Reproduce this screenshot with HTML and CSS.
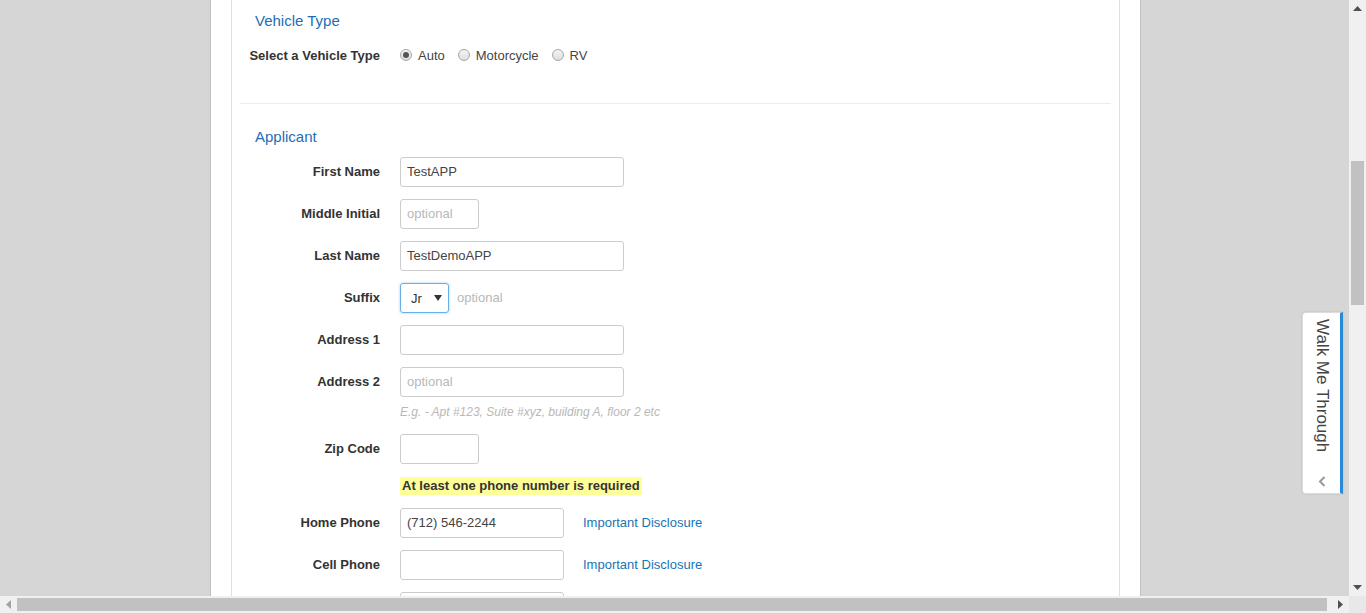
FILE: index.html
```html
<!DOCTYPE html>
<html lang="en">
<head>
<meta charset="utf-8">
<title>Application</title>
<link rel="stylesheet" href="styles.css">
</head>
<body>
<div class="window">
  <div class="main">
    <div class="viewport">
      <div class="page">
        <div class="panel">
          <section class="section">
            <h2 class="section-title">Vehicle Type</h2>
            <div class="row">
              <div class="label label-radio">Select a Vehicle Type</div>
              <div class="field radios">
                <span class="radio checked"></span><span class="radio-text">Auto</span>
                <span class="radio"></span><span class="radio-text">Motorcycle</span>
                <span class="radio"></span><span class="radio-text">RV</span>
              </div>
            </div>
          </section>
          <hr class="divider">
          <section class="section applicant">
            <h2 class="section-title">Applicant</h2>
            <div class="rows">
              <div class="row">
                <div class="label">First Name</div>
                <div class="field"><div class="input w-lg">TestAPP</div></div>
              </div>
              <div class="row">
                <div class="label">Middle Initial</div>
                <div class="field"><div class="input w-sm placeholder">optional</div></div>
              </div>
              <div class="row">
                <div class="label">Last Name</div>
                <div class="field"><div class="input w-lg">TestDemoAPP</div></div>
              </div>
              <div class="row">
                <div class="label">Suffix</div>
                <div class="field">
                  <div class="select">
                    <span>Jr</span>
                    <svg class="caret" width="8" height="6" viewBox="0 0 8 6"><path d="M0 0h8L4 6z" fill="#333"/></svg>
                  </div>
                  <span class="optional">optional</span>
                </div>
              </div>
              <div class="row">
                <div class="label">Address 1</div>
                <div class="field"><div class="input w-lg"></div></div>
              </div>
              <div class="row row-top">
                <div class="label label-top">Address 2</div>
                <div class="field field-col">
                  <div class="input w-lg placeholder">optional</div>
                  <div class="hint">E.g. - Apt #123, Suite #xyz, building A, floor 2 etc</div>
                </div>
              </div>
              <div class="row">
                <div class="label">Zip Code</div>
                <div class="field"><div class="input w-sm"></div></div>
              </div>
              <div class="row row-notice">
                <div class="label"></div>
                <div class="field"><span class="notice">At least one phone number is required</span></div>
              </div>
              <div class="row">
                <div class="label">Home Phone</div>
                <div class="field">
                  <div class="input w-md">(712) 546-2244</div>
                  <a class="link">Important Disclosure</a>
                </div>
              </div>
              <div class="row">
                <div class="label">Cell Phone</div>
                <div class="field">
                  <div class="input w-md"></div>
                  <a class="link">Important Disclosure</a>
                </div>
              </div>
              <div class="row">
                <div class="label"></div>
                <div class="field">
                  <div class="input w-md"></div>
                </div>
              </div>
            </div>
          </section>
        </div>
      </div>
      <div class="walk-tab">
        <span class="walk-text">Walk Me Through</span>
        <svg class="walk-chevron" width="8" height="11" viewBox="0 0 8 11"><path d="M6.5 1L2 5.5 6.5 10" fill="none" stroke="#999" stroke-width="2"/></svg>
      </div>
    </div>
    <div class="vscroll">
      <div class="arrow-box"><svg width="9" height="5" viewBox="0 0 9 5"><path d="M0 5L4.5 0 9 5z" fill="#505050"/></svg></div>
      <div class="vtrack">
        <div class="vthumb"></div>
      </div>
      <div class="arrow-box"><svg width="9" height="5" viewBox="0 0 9 5"><path d="M0 0h9L4.5 5z" fill="#505050"/></svg></div>
    </div>
  </div>
  <div class="hscroll">
    <div class="harrow"><svg width="5" height="9" viewBox="0 0 5 9"><path d="M5 0v9L0 4.5z" fill="#a3a3a3"/></svg></div>
    <div class="htrack"><div class="hthumb"></div></div>
    <div class="harrow"><svg width="5" height="9" viewBox="0 0 5 9"><path d="M0 0v9l5-4.5z" fill="#505050"/></svg></div>
    <div class="corner"></div>
  </div>
</div>
</body>
</html>
```

FILE: styles.css
```css
* { box-sizing: border-box; }

html, body {
  margin: 0;
  padding: 0;
  width: 1366px;
  height: 613px;
  overflow: hidden;
  font-family: "Liberation Sans", Arial, sans-serif;
  font-size: 13px;
  color: #333;
}

.window {
  display: flex;
  flex-direction: column;
  width: 1366px;
  height: 613px;
}

.main {
  display: flex;
  height: 596px;
}

.viewport {
  position: relative;
  flex: 1;
  background: #d6d6d6;
  overflow: hidden;
  display: flex;
}

.page {
  margin-left: 210px;
  width: 931px;
  height: 100%;
  background: #fff;
  border-left: 1px solid #c2c2c2;
  border-right: 1px solid #c2c2c2;
  padding: 0 20px;
  display: flex;
  flex-direction: column;
}

.panel {
  flex: 1;
  border-left: 1px solid #e0e0e0;
  border-right: 1px solid #e0e0e0;
  padding-top: 11px;
}

.section-title {
  margin: 0;
  padding-left: 23px;
  font-size: 15px;
  line-height: 20px;
  font-weight: normal;
  color: #1f6db3;
}

.row {
  display: grid;
  grid-template-columns: 148px 1fr;
  column-gap: 20px;
  align-items: center;
  min-height: 30px;
}

.section > .row {
  margin-top: 9px;
}

.label {
  text-align: right;
  font-weight: bold;
  color: #333;
  padding-bottom: 2px;
}

.label-radio { padding-bottom: 0; }

.field {
  display: flex;
  align-items: center;
}

.radios {
  height: 30px;
}

.radio {
  width: 12px;
  height: 12px;
  border-radius: 50%;
  border: 1px solid #a8a8a8;
  background: linear-gradient(#f4f4f4, #dedede);
  display: inline-flex;
  align-items: center;
  justify-content: center;
}

.radio.checked::after {
  content: "";
  width: 6px;
  height: 6px;
  border-radius: 50%;
  background: #555;
}

.radio-text {
  margin-left: 6px;
  margin-right: 13px;
  color: #444;
}

.divider {
  margin: 33px 8px 0;
  border: 0;
  border-top: 1px solid #ececec;
  height: 0;
}

.applicant {
  padding-top: 23px;
}

.rows {
  margin-top: 10px;
  display: flex;
  flex-direction: column;
  gap: 12px;
}

.input {
  height: 30px;
  border: 1px solid #ccc;
  border-radius: 3px;
  padding: 0 6px;
  line-height: 28px;
  color: #444;
  background: #fff;
}

.placeholder { color: #b8b8b8; }

.w-lg { width: 224px; }
.w-md { width: 164px; }
.w-sm { width: 79px; }

.select {
  width: 49px;
  height: 30px;
  border: 1px solid #66afe9;
  border-radius: 3px;
  box-shadow: 0 0 3px rgba(102, 175, 233, 0.6);
  display: flex;
  align-items: center;
  justify-content: space-between;
  padding: 0 6px 0 10px;
  color: #333;
}

.caret { display: block; }

.optional {
  margin-left: 8px;
  color: #b8b8b8;
  padding-bottom: 2px;
}

.row-top { align-items: start; }
.label-top { line-height: 30px; padding-bottom: 0; }

.field-col {
  flex-direction: column;
  align-items: flex-start;
}

.hint {
  margin: 7px 0 1px;
  line-height: 17px;
  font-size: 12px;
  font-style: italic;
  color: #b8b8b8;
}

.row-notice { min-height: 18px; margin: 1px 0 1px; }

.notice {
  background: #ffff99;
  font-weight: bold;
  color: #333;
  padding: 0 2px;
  line-height: 18px;
}

.link {
  margin-left: 19px;
  color: #1a73b5;
  text-decoration: none;
  padding-bottom: 2px;
}

.walk-tab {
  position: absolute;
  top: 312px;
  right: 6px;
  width: 41px;
  height: 182px;
  background: #fff;
  border: 1px solid #dcdcdc;
  border-right: 3px solid #2b8ad8;
  border-radius: 4px 0 0 4px;
  box-shadow: 0 0 2px rgba(0, 0, 0, 0.15);
  display: flex;
  flex-direction: column;
  align-items: center;
  padding-top: 6px;
}

.walk-text {
  writing-mode: vertical-rl;
  font-size: 17px;
  color: #444;
}

.walk-chevron {
  margin-top: auto;
  margin-bottom: 6px;
}

.vscroll {
  width: 17px;
  background: #f0f0f0;
  display: flex;
  flex-direction: column;
}

.arrow-box {
  height: 17px;
  display: flex;
  align-items: center;
  justify-content: center;
}

.vtrack {
  flex: 1;
  padding: 0 2px;
}

.vthumb {
  margin-top: 144px;
  height: 144px;
  background: #c1c1c1;
}

.hscroll {
  height: 17px;
  display: flex;
  background: #f0f0f0;
}

.harrow {
  width: 17px;
  display: flex;
  align-items: center;
  justify-content: center;
}

.htrack {
  flex: 1;
  padding: 2px 0;
}

.hthumb {
  height: 13px;
  width: 1310px;
  background: #c1c1c1;
}

.corner {
  width: 17px;
  background: #e8e8e8;
}
```
